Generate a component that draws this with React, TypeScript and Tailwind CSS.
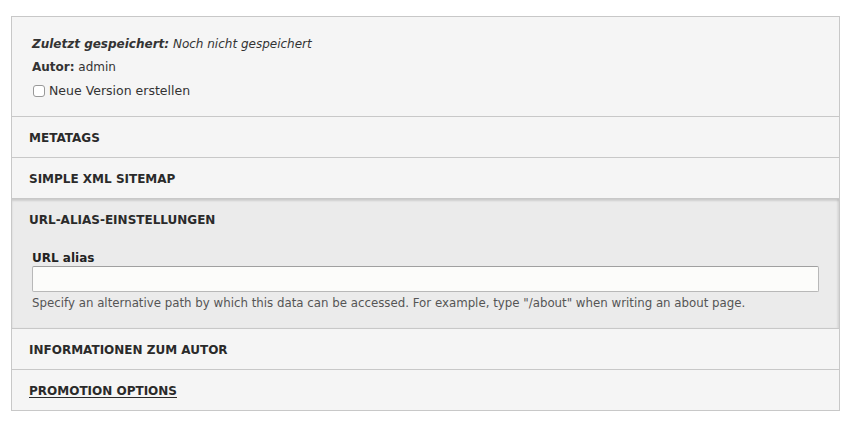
const font = { fontFamily: '"DejaVu Sans", Verdana, sans-serif' };

const Summary = ({ label, underline }: { label: string; underline?: boolean }) => (
  <div className="flex h-[41px] items-center border-t border-[#c8c8c8] bg-[#f5f5f5] px-[17px] pt-[2px]">
    <span className={`text-[12px] font-bold uppercase text-[#2a2a2a] ${underline ? 'underline underline-offset-2' : ''}`}>
      {label}
    </span>
  </div>
);

export default function App() {
  return (
    <div className="min-h-screen bg-white px-[11px] pt-[16px]" style={font}>
      <div className="w-[829px] border border-[#c8c8c8] text-[#333]">
        <div className="bg-[#f5f5f5] px-[20px] pt-[16px] pb-[14px] text-[12px]">
          <p className="leading-[23px] italic">
            <span className="font-bold">Zuletzt gespeichert:</span> Noch nicht gespeichert
          </p>
          <p className="leading-[23px]">
            <span className="font-bold">Autor:</span> admin
          </p>
          <label className="flex items-center gap-[4px] text-[12.5px] leading-[23px]">
            <span className="ml-[1px] h-[12px] w-[12px] rounded-[3px] border border-[#999] bg-white" />
            Neue Version erstellen
          </label>
        </div>
        <Summary label="Metatags" />
        <Summary label="Simple XML Sitemap" />
        <div className="border-t border-[#c8c8c8] bg-[#ebebeb] shadow-[inset_0_2px_2px_rgba(0,0,0,0.12),inset_-2px_0_2px_rgba(0,0,0,0.06)]">
          <div className="flex h-[40px] items-center px-[17px] pt-[2px]">
            <span className="text-[12px] font-bold uppercase text-[#2a2a2a]">URL-Alias-Einstellungen</span>
          </div>
          <div className="px-[20px] pt-[11px] pb-[17px]">
            <div className="text-[12px] font-bold leading-[16px] text-[#222]">URL alias</div>
            <div className="h-[26px] w-[787px] rounded-[2px] border border-[#b8b8b8] border-t-[#a0a0a0] bg-[#fcfcfa]" />
            <p className="mt-[3px] text-[11.8px] leading-[16px] text-[#555]">
              Specify an alternative path by which this data can be accessed. For example, type "/about" when writing an about page.
            </p>
          </div>
        </div>
        <Summary label="Informationen zum Autor" />
        <Summary label="Promotion options" underline />
      </div>
    </div>
  );
}
